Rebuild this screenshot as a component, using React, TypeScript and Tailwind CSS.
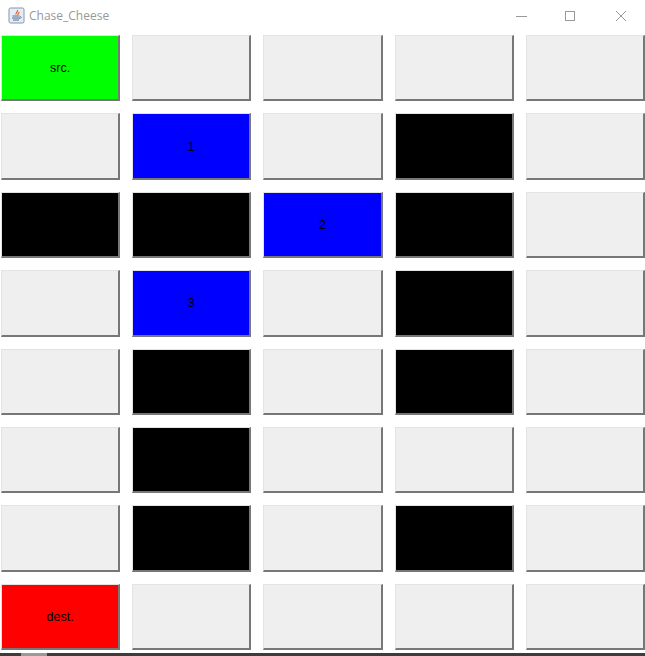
const F = "flex items-center justify-center min-w-0 pt-[2px] text-[12.5px] text-black border-t border-l border-t-[#e3e3e3] border-l-[#e3e3e3] border-r-2 border-b-2 border-r-[#777777] border-b-[#777777] font-['Liberation_Sans',sans-serif]";

type Cell = { c: string; t?: string };
const e: Cell = { c: "bg-[#efefef]" };
const k: Cell = { c: "bg-black" };
const b = (t: string): Cell => ({ c: "bg-[#0000ff] text-[#000044]", t });

const cells: Cell[] = [
  { c: "bg-[#00ff00] text-[#003000]", t: "src." }, e, e, e, e,
  e, b("1"), e, k, e,
  k, k, b("2"), k, e,
  e, b("3"), e, k, e,
  e, k, e, k, e,
  e, k, e, e, e,
  e, k, e, k, e,
  { c: "bg-[#ff0000] text-[#600000]", t: "dest." }, e, e, e, e,
];

function JavaIcon() {
  return (
    <svg width="17" height="17" viewBox="0 0 17 17" fill="none">
      <rect x="1" y="1" width="15" height="15" rx="1.5" fill="#e6edf4" stroke="#7f97ad" />
      <path d="M9.5 3c1 1.5-2 2.5-1.5 4.5M11 5c.5 1-1.5 1.5-1 3" stroke="#e8622a" strokeWidth="1.2" />
      <path d="M4.5 9h7M4 11h8M5 13h6" stroke="#4f6f8f" strokeWidth="1" />
      <path d="M12 9.5c2 0 1.5 2-.5 2" stroke="#4f6f8f" strokeWidth=".8" />
    </svg>
  );
}

export default function App() {
  return (
    <div className="w-[645px] h-[656px] bg-white overflow-hidden flex flex-col">
      <div className="h-[35px] shrink-0 flex items-center pl-[8px] pb-[4px]">
        <JavaIcon />
        <span className="ml-[4px] text-[12px] text-[#999999] font-['Open_Sans',sans-serif]">Chase_Cheese</span>
        <div className="ml-auto flex items-center">
          <svg width="11" height="14" viewBox="0 0 11 14" className="mr-[37px]"><path d="M0 7.5h11" stroke="#999999" /></svg>
          <svg width="12" height="12" viewBox="0 0 12 12" className="mr-[39px]"><rect x="1.5" y="1.5" width="9" height="9" fill="none" stroke="#999999" /></svg>
          <svg width="12" height="12" viewBox="0 0 12 12" className="mr-[18px]"><path d="M1 1l10 10M11 1L1 11" stroke="#999999" /></svg>
        </div>
      </div>
      <div className="grid grid-cols-5 grid-rows-8 gap-[12px] pl-[1px] h-[615px] shrink-0">
        {cells.map((cell, i) => (
          <div key={i} className={`${F} ${cell.c}`}>{cell.t}</div>
        ))}
      </div>
      <div className="mt-[3px] flex-1 bg-[#3f3a3c] flex">
        <div className="ml-[21px] w-[26px] bg-[#9a9a9a]" />
      </div>
    </div>
  );
}
